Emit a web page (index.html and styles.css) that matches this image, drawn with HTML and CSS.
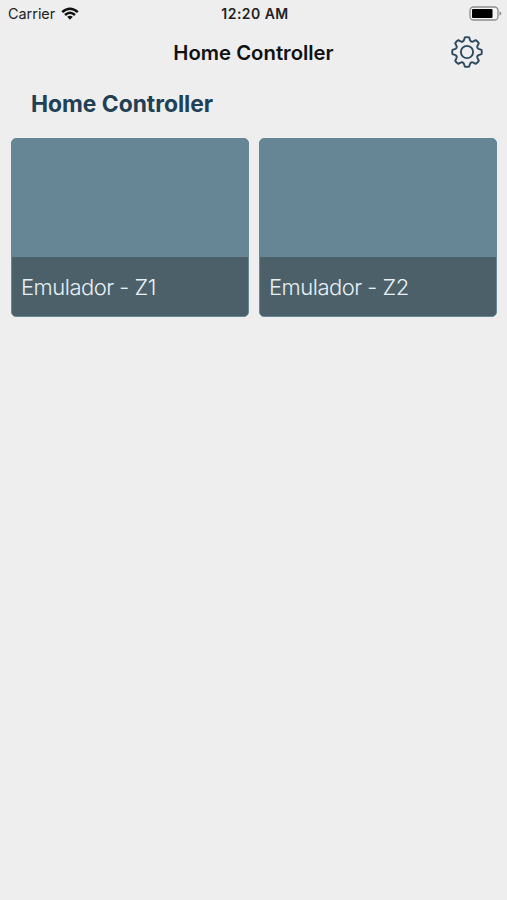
FILE: index.html
```html
<!DOCTYPE html>
<html lang="en">
<head>
  <meta charset="UTF-8">
  <meta name="viewport" content="width=device-width, initial-scale=1.0">
  <title>Home Controller</title>
  <link rel="stylesheet" href="styles.css">
</head>
<body>
  <div class="status-bar">
    <div class="carrier">
      <span class="carrier-name">Carrier</span>
      <svg class="wifi" width="18" height="13" viewBox="0 0 18 13">
        <g fill="none" stroke="#111" stroke-width="2.5">
          <path d="M1.2 5.1Q9 -1.7 16.8 5.1"/>
          <path d="M4 8Q9 3.6 14 8"/>
        </g>
        <path d="M6.2 9.8Q9 7.6 11.8 9.8L9 12.7Z" fill="#111"/>
      </svg>
    </div>
    <span class="time">12:20 AM</span>
    <svg class="battery" width="33" height="15" viewBox="0 0 33 15">
      <rect x="1" y="1" width="28" height="13" rx="3.5" fill="#f5f5f5" stroke="#8c8c8c" stroke-width="1.3"/>
      <rect x="3" y="3" width="20.5" height="9" rx="1" fill="#000"/>
      <path d="M30.5 5.3Q32.3 6 32.3 7.5Q32.3 9 30.5 9.7Z" fill="#8c8c8c"/>
    </svg>
  </div>

  <header class="header">
    <h1 class="header-title">Home Controller</h1>
    <svg class="settings" width="34" height="34" viewBox="-17 -17 34 34">
      <g fill="none" stroke="#2c4a60" stroke-width="1.9" stroke-linejoin="round">
        <path d="M-3.2 -11.5L-2.2 -14.5Q0 -15.2 2.2 -14.5L3.2 -11.5Q4.1 -9.8 5.87 -10.39L8.7 -11.81Q10.75 -10.75 11.81 -8.7L10.39 -5.87Q9.8 -4.1 11.5 -3.2L14.5 -2.2Q15.2 0 14.5 2.2L11.5 3.2Q9.8 4.1 10.39 5.87L11.81 8.7Q10.75 10.75 8.7 11.81L5.87 10.39Q4.1 9.8 3.2 11.5L2.2 14.5Q0 15.2 -2.2 14.5L-3.2 11.5Q-4.1 9.8 -5.87 10.39L-8.7 11.81Q-10.75 10.75 -11.81 8.7L-10.39 5.87Q-9.8 4.1 -11.5 3.2L-14.5 2.2Q-15.2 0 -14.5 -2.2L-11.5 -3.2Q-9.8 -4.1 -10.39 -5.87L-11.81 -8.7Q-10.75 -10.75 -8.7 -11.81L-5.87 -10.39Q-4.1 -9.8 -3.2 -11.5Z"/>
        <circle r="6.1"/>
      </g>
    </svg>
  </header>

  <main class="content">
    <h2 class="section-title">Home Controller</h2>
    <div class="zones">
      <div class="zone">
        <div class="zone-label"><span class="zone-name">Emulador - Z1</span></div>
      </div>
      <div class="zone">
        <div class="zone-label"><span class="zone-name">Emulador - Z2</span></div>
      </div>
    </div>
  </main>
</body>
</html>
```

FILE: styles.css
```css
* {
  box-sizing: border-box;
}

body {
  margin: 0;
  min-height: 100vh;
  background: #eeeeee;
  font-family: Inter, sans-serif;
}

.status-bar {
  display: grid;
  grid-template-columns: 1fr auto 1fr;
  align-items: center;
  height: 27px;
  padding: 0 5px 0 8px;
  color: #222;
}

.carrier {
  display: flex;
  align-items: center;
  gap: 6px;
}

.carrier-name {
  font-size: 14.4px;
  line-height: 27px;
}

.time {
  font-size: 14px;
  font-weight: 600;
  letter-spacing: 0.45px;
}

.battery {
  justify-self: end;
}

.header {
  display: grid;
  grid-template-columns: 1fr auto 1fr;
  align-items: center;
  height: 50px;
  padding: 0 23px;
}

.header-title {
  grid-column: 2;
  margin: 0;
  padding-top: 1px;
  font-size: 20.3px;
  font-weight: 600;
  color: #111;
}

.settings {
  justify-self: end;
}

.content {
  padding: 0 10px 0 11px;
}

.section-title {
  margin: 0;
  padding-left: 20px;
  height: 61px;
  font-size: 22.8px;
  font-weight: 700;
  line-height: 53px;
  color: #213f55;
}

.zones {
  display: grid;
  grid-template-columns: 1fr 1fr;
  gap: 10px;
}

.zone {
  display: flex;
  flex-direction: column;
  justify-content: flex-end;
  height: 179px;
  border: 1px solid #668696;
  border-radius: 5px;
  background: #668696;
  overflow: hidden;
}

.zone-label {
  height: 59px;
  padding-left: 9px;
  background: #4b6069;
  color: #e8f0f5;
  font-size: 22px;
  font-weight: 300;
  letter-spacing: -0.5px;
  line-height: 61px;
}
```
